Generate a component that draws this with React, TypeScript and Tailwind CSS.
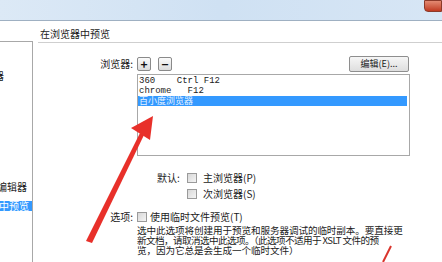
import React from "react"

const cjk = "font-['Noto_Sans_CJK_SC','Noto_Sans',sans-serif]"

function Checkbox() {
  return (
    <span className="inline-block w-[10px] h-[10px] border border-[#9a9a9a] bg-gradient-to-br from-[#d8d8d8] to-[#f4f4f4] shrink-0" />
  )
}

function SmallButton({ children }: { children: React.ReactNode }) {
  return (
    <span className="flex items-center justify-center w-[14px] h-[14px] border border-[#8a8a8a] rounded-[2px] bg-gradient-to-b from-[#fbfbfb] to-[#dcdcdc] text-[12px] leading-none font-bold text-[#111]">
      {children}
    </span>
  )
}

export default function App() {
  return (
    <div className={`relative w-[442px] h-[262px] overflow-hidden bg-white text-[#1b1b1b] ${cjk}`}>
      {/* title bar */}
      <div className="relative h-[21px] border-b border-[#9fb0c2] bg-gradient-to-r from-[#dce9f6] via-[#cfe1f3] to-[#d7e6f5]">
        <div className="absolute right-0 top-0 w-[18px] h-[12px] rounded-bl-[4px] border border-[#8c3a2a] bg-gradient-to-b from-[#e38a72] to-[#c0391f]" />
      </div>

      <div className="flex">
        {/* left category list */}
        <div className="mt-[20px] w-[33px] h-[221px] border-t border-r border-[#a8a8a8] overflow-hidden text-[10px] leading-[10px]">
          <div className="mt-[29px] flex justify-end pr-[28px] whitespace-nowrap">浏览器</div>
          <div className="mt-[101px] flex justify-end pr-[5px] whitespace-nowrap">代码编辑器</div>
          <div className="mt-[9px] h-[10px] bg-[#3399ff] text-white flex justify-end pr-[3px] whitespace-nowrap">在浏览器中预览</div>
        </div>

        {/* right panel */}
        <div className="ml-[5px] flex-1">
          <div className="pt-[7px] pb-[2px] pl-[2px] border-b border-[#cfcfcf] text-[10px] leading-[12px]">
            在浏览器中预览
          </div>

          <div className="mt-[13px] grid grid-cols-[95px_273px] gap-x-[4px] text-[10px] leading-[10px]">
            {/* browsers row */}
            <div className="flex items-center justify-end h-[15px]">浏览器:</div>
            <div className="flex items-center h-[15px]">
              <SmallButton>+</SmallButton>
              <span className="ml-[7px]">
                <SmallButton>−</SmallButton>
              </span>
              <span className="ml-auto mr-[1px] flex items-center justify-center w-[60px] h-[16px] border border-[#8e8e8e] rounded-[2px] bg-gradient-to-b from-[#f6f6f6] to-[#dedede] text-[9px] whitespace-nowrap">
                编辑(E)...
              </span>
            </div>

            {/* list box */}
            <div />
            <div className="mt-[3px] h-[82px] border border-[#a8a8a8] pt-[1px] pr-[2px] text-[9px] leading-[10px]">
              <div className="pl-[1px] font-['Liberation_Mono',monospace] whitespace-pre">360    Ctrl F12</div>
              <div className="pl-[1px] font-['Liberation_Mono',monospace] whitespace-pre">chrome   F12</div>
              <div className="pl-[1px] bg-[#3399ff] text-[#e8f3ff]">百小度浏览器</div>
            </div>

            {/* default browser */}
            <div />
            <div className="mt-[17px] pl-[20px] flex flex-col gap-[6px]">
              <div className="flex items-center gap-[6px]">
                <span className="w-[24px]">默认:</span>
                <Checkbox />
                <span>主浏览器(P)</span>
              </div>
              <div className="flex items-center gap-[6px] pl-[30px]">
                <Checkbox />
                <span>次浏览器(S)</span>
              </div>
            </div>

            {/* options */}
            <div className="mt-[13px] flex items-center justify-end h-[10px]">选项:</div>
            <div className="mt-[13px] flex items-center gap-[3px] h-[10px]">
              <Checkbox />
              <span>使用临时文件预览(T)</span>
            </div>
            <div />
            <div className="mt-[3px] text-[9.6px] tracking-[-0.1px] leading-[10px] whitespace-nowrap">
              <div>选中此选项将创建用于预览和服务器调试的临时副本。要直接更</div>
              <div className="tracking-[-0.6px]">新文档，请取消选中此选项。（此选项不适用于 XSLT 文件的预</div>
              <div>览，因为它总是会生成一个临时文件）</div>
            </div>
          </div>
        </div>
      </div>

      {/* red annotation arrows */}
      <svg className="absolute left-0 top-0 pointer-events-none" width="442" height="262">
        <path d="M86 241 L140 133 L144 135 L92 243 Z" fill="#e8302a" />
        <polygon points="153,116 150,140 131,128" fill="#e8302a" />
        <path d="M383 262 L391 246" stroke="#d9342c" strokeWidth="2" />
      </svg>
    </div>
  )
}
